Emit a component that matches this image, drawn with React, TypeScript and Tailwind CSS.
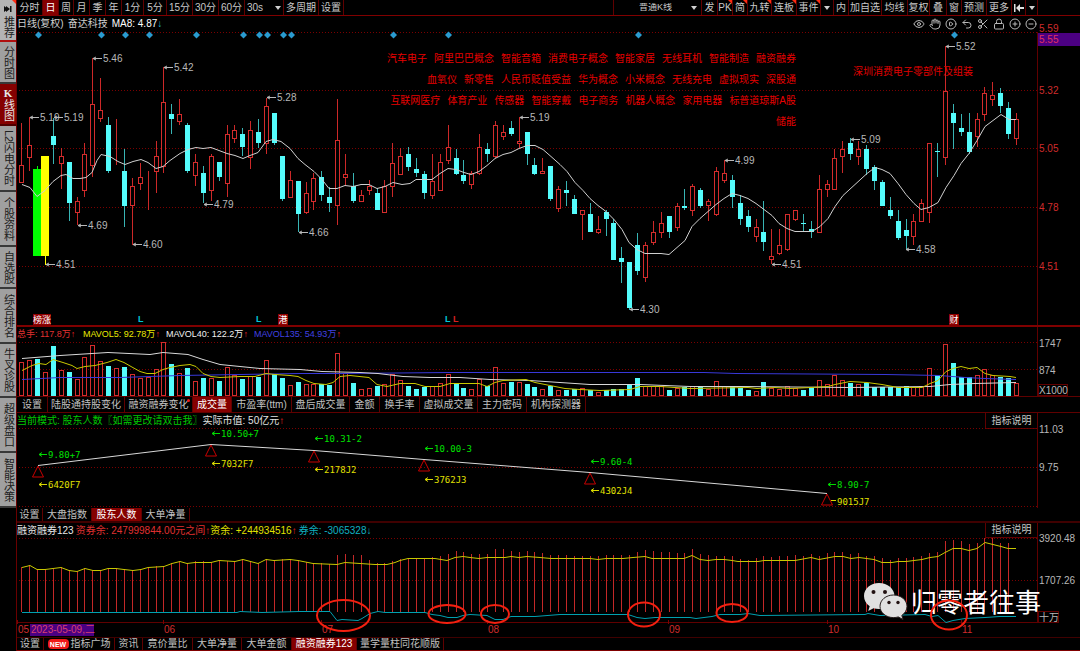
import React from "react";
import {
  CircleMinus,
  CirclePlay,
  CirclePlus,
  Eye,
  Hand,
  Lock,
  Scissors,
  Undo2,
} from "lucide-react";

type Kind = "r" | "c" | "g" | "y";
// kind, high, body top, body bottom, low, volume top
type Bar = [Kind, number, number, number, number, number];

const BARS: Bar[] = [
  ["r", 123, 165, 182, 183, 362], ["r", 117, 145, 157, 171, 360], ["g", 166, 169, 256, 256, 359],
  ["y", 156, 156, 256, 265, 372], ["c", 118, 136, 145, 164, 346], ["r", 148, 156, 163, 189, 370],
  ["c", 162, 162, 203, 221, 372], ["r", 197, 201, 212, 225, 379], ["r", 143, 154, 190, 197, 357],
  ["r", 58, 104, 165, 177, 345], ["r", 78, 110, 118, 122, 361], ["c", 117, 125, 171, 173, 366],
  ["r", 119, 165, 165, 165, 368], ["c", 149, 171, 206, 227, 367], ["r", 178, 186, 205, 245, 374],
  ["r", 163, 177, 183, 190, 378], ["r", 171, 171, 171, 210, 377], ["r", 141, 156, 171, 193, 369],
  ["r", 67, 102, 166, 173, 342], ["c", 104, 114, 119, 134, 364], ["r", 99, 114, 121, 125, 373],
  ["c", 123, 125, 171, 173, 368], ["r", 154, 162, 175, 186, 381], ["c", 166, 173, 193, 203, 378],
  ["r", 154, 156, 190, 201, 378], ["c", 162, 162, 177, 181, 381], ["r", 125, 134, 183, 197, 367],
  ["r", 125, 130, 138, 143, 375], ["c", 128, 134, 147, 156, 379], ["r", 121, 130, 157, 169, 376],
  ["c", 119, 132, 143, 148, 377], ["r", 98, 106, 143, 154, 360], ["c", 113, 113, 143, 145, 374],
  ["c", 156, 156, 199, 201, 378], ["r", 171, 180, 197, 197, 385], ["c", 181, 181, 214, 232, 382],
  ["r", 182, 193, 212, 214, 384], ["r", 173, 178, 201, 210, 384], ["c", 171, 177, 195, 201, 384],
  ["c", 187, 197, 203, 212, 385], ["r", 99, 140, 205, 225, 353], ["r", 154, 174, 177, 186, 373],
  ["c", 173, 186, 201, 203, 383], ["r", 190, 195, 201, 201, 389], ["r", 180, 186, 190, 195, 388],
  ["c", 188, 193, 210, 210, 386], ["r", 180, 186, 212, 212, 384], ["r", 143, 163, 186, 197, 374],
  ["r", 148, 156, 174, 175, 380], ["c", 147, 154, 167, 171, 386], ["c", 158, 169, 173, 177, 389],
  ["c", 171, 174, 193, 199, 387], ["r", 154, 181, 195, 199, 386], ["r", 154, 162, 190, 190, 383],
  ["r", 125, 147, 160, 164, 374], ["c", 149, 158, 174, 175, 384], ["c", 160, 175, 181, 184, 388],
  ["r", 171, 173, 184, 189, 389], ["r", 134, 147, 173, 175, 379], ["c", 143, 149, 154, 162, 386],
  ["r", 121, 125, 156, 158, 367], ["r", 125, 132, 136, 140, 383], ["c", 121, 128, 134, 136, 382],
  ["r", 117, 141, 143, 148, 382], ["c", 132, 132, 154, 165, 384], ["c", 158, 165, 174, 175, 387],
  ["r", 158, 171, 173, 173, 389], ["c", 166, 166, 199, 201, 386], ["r", 186, 189, 208, 212, 390],
  ["c", 181, 190, 193, 206, 390], ["c", 195, 199, 214, 214, 389], ["r", 210, 210, 214, 240, 388],
  ["c", 203, 214, 232, 232, 390], ["r", 216, 229, 232, 234, 392], ["c", 210, 212, 219, 236, 390],
  ["c", 219, 223, 260, 260, 389], ["c", 247, 258, 262, 283, 389], ["c", 262, 262, 308, 310, 385],
  ["c", 233, 245, 271, 275, 378], ["r", 242, 245, 277, 282, 386], ["r", 221, 232, 242, 245, 386],
  ["r", 212, 223, 232, 238, 386], ["c", 216, 216, 232, 238, 390], ["r", 203, 206, 227, 231, 388],
  ["c", 189, 206, 208, 210, 387], ["r", 184, 186, 210, 216, 386], ["c", 188, 190, 206, 208, 386],
  ["r", 199, 201, 205, 221, 389], ["r", 167, 171, 214, 216, 381], ["r", 160, 173, 180, 183, 386],
  ["c", 175, 180, 197, 208, 386], ["c", 195, 203, 219, 225, 388], ["c", 210, 216, 227, 232, 390],
  ["r", 219, 227, 236, 242, 391], ["c", 201, 232, 242, 251, 382], ["r", 229, 256, 259, 264, 388],
  ["r", 229, 245, 253, 255, 389], ["r", 214, 214, 249, 251, 386], ["r", 210, 210, 219, 221, 388],
  ["c", 214, 223, 224, 231, 390], ["c", 221, 229, 232, 238, 388], ["r", 175, 189, 232, 232, 380],
  ["r", 180, 184, 189, 197, 384], ["r", 149, 158, 189, 190, 375], ["r", 141, 149, 156, 173, 380],
  ["c", 138, 143, 154, 160, 383], ["r", 141, 149, 156, 165, 384], ["c", 145, 149, 169, 175, 383],
  ["c", 165, 167, 181, 190, 387], ["c", 180, 182, 206, 206, 387], ["c", 197, 210, 216, 219, 387],
  ["c", 210, 221, 238, 240, 387], ["c", 219, 230, 236, 249, 386], ["r", 214, 221, 236, 245, 387],
  ["r", 199, 203, 221, 221, 386], ["r", 143, 143, 212, 223, 368], ["c", 143, 151, 152, 177, 375],
  ["r", 46, 91, 157, 165, 344], ["c", 104, 113, 123, 149, 363], ["c", 114, 128, 132, 136, 377],
  ["c", 113, 132, 152, 154, 377], ["r", 113, 119, 136, 147, 375], ["r", 87, 93, 114, 121, 369],
  ["r", 82, 95, 99, 106, 375], ["c", 88, 93, 106, 113, 377], ["c", 102, 108, 134, 139, 378],
  ["r", 113, 119, 138, 145, 383],
];

const MARGIN_TOPS = [
  567, 565, 569, 569, 569, 567, 570, 571, 568, 570, 570, 568, 568, 569, 570, 569, 567, 566, 566, 563,
  561, 563, 561, 561, 562, 560, 561, 561, 559, 561, 563, 559, 560, 559, 559, 560, 562, 563, 563, 564,
  555, 554, 555, 555, 560, 563, 563, 561, 559, 558, 558, 558, 557, 556, 554, 551, 552, 554, 554, 554,
  549, 549, 551, 552, 551, 552, 553, 555, 555, 555, 556, 556, 556, 556, 555, 555, 555, 555, 552, 550,
  551, 552, 552, 553, 553, 549, 554, 555, 556, 556, 556, 559, 560, 558, 556, 557, 556, 556, 555, 556,
  554, 556, 553, 552, 552, 554, 553, 556, 556, 558, 560, 558, 558, 557, 556, 553, 552, 541, 540, 541,
  544, 543, 538, 538, 543, 543,
];

const MA8 =
  "22,184 30,187 37,196 45,190 53,181 61,175 66,174 73,178 80,178 86,177 92,172 97,160 101,154 110,156 118,161 125,164 133,161 141,159 148,162 156,168 163,166 170,160 180,153 188,149 196,147 203,148 211,147 219,150 227,153 235,155 243,158 250,155 258,152 266,141 273,139 281,141 290,148 298,158 305,164 314,171 322,179 329,188 337,188 345,185 353,186 361,184 369,184 377,188 385,186 393,182 402,184 410,183 416,179 432,179 440,173 448,168 456,169 464,172 471,174 479,171 487,165 495,158 503,154 511,152 519,148 527,145 535,145 543,149 551,156 560,164 567,171 575,182 583,190 590,198 598,205 606,211 614,219 622,229 629,242 637,249 645,253 661,253 669,254 677,247 685,240 692,226 700,218 708,211 716,204 724,198 732,193 740,195 748,198 756,203 764,209 772,215 779,223 787,228 795,231 812,231 820,226 828,218 835,206 843,195 855,184 867,173 875,167 882,169 890,173 898,183 906,194 914,203 921,209 929,207 938,202 946,187 954,175 961,163 969,153 977,140 985,126 993,120 1001,114 1009,119 1016,119";
const VOL_5 =
  "22,370 32,365 39,363 46,364 53,359 63,362 72,365 77,368 85,366 95,365 107,362 116,359 124,362 131,366 140,371 147,373 155,373 163,369 170,367 180,365 190,364 196,366 203,373 211,376 220,377 240,376 255,376 266,373 275,374 290,375 298,376 306,380 314,383 326,384 333,382 340,376 350,375 369,377 377,384 387,386 400,383 415,383 425,386 440,386 450,383 479,383 487,386 495,382 503,380 526,379 535,382 550,385 565,388 580,389 600,390 630,389 640,386 660,386 690,388 748,387 757,388 775,387 790,388 810,387 828,386 835,384 850,381 867,382 882,384 898,387 922,387 930,383 938,380 946,371 953,368 961,366 969,368 977,367 985,373 993,375 1010,376 1016,377";
const VOL_40 =
  "22,358 60,355 108,352 150,354 163,352 188,354 203,359 220,364 240,366 260,368 300,369 322,371 360,372 378,373 403,376 430,377 460,377 490,379 530,380 560,382 590,384 640,384 690,386 740,386 850,387 930,386 950,384 975,383 1016,382";
const VOL_135 =
  "22,379 60,377 120,377 180,375 240,374 300,373 340,373 452,372 704,372 736,373 885,374 940,375 965,377 985,378 1016,379";
const MARGIN_LINE =
  "22,567 30,565 37,569 45,569 61,567 69,570 77,571 85,568 93,570 101,570 108,568 116,568 124,569 133,570 141,569 148,567 164,566 172,563 180,561 187,563 195,562 211,562 219,560 235,561 243,559 258,563 266,559 274,560 290,559 298,560 313,563 337,564 345,562 360,563 375,564 387,564 395,562 400,560 408,558 435,558 447,560 455,557 463,556 470,557 479,558 487,557 505,557 511,556 519,557 527,556 540,557 551,558 590,558 598,559 606,558 623,558 633,557 645,556 652,558 684,558 692,555 700,559 708,560 716,559 724,559 732,560 738,561 758,561 764,560 795,560 811,557 819,559 835,556 843,556 851,558 859,557 874,559 882,562 892,562 898,561 906,561 922,559 930,557 938,556 945,552 953,548 961,548 969,550 977,548 985,542 993,544 1001,546 1008,548 1016,548";
const SHORT_LINE =
  "22,612 237,612 240,611 262,612 300,611 330,611 337,620 342,619 358,620 362,618 370,613 378,611 385,612 425,612 432,614 440,615 448,617 457,617 463,615 470,614 487,615 495,619 503,619 511,616 535,616 560,614 628,614 637,617 645,618 655,617 690,617 696,618 712,616 720,614 740,614 748,613 760,615 865,614 868,613 880,615 925,614 932,616 938,615 946,622 953,620 965,618 985,617 1000,616 1016,616";

const PRICE_TAGS: [number, number, string][] = [
  [93, 58, "5.46"], [164, 67, "5.42"], [267, 97, "5.28"], [30, 117, "5.19"], [54, 117, "5.19"],
  [78, 225, "4.69"], [133, 244, "4.60"], [46, 264, "4.51"], [204, 204, "4.79"], [299, 232, "4.66"],
  [520, 117, "5.19"], [725, 160, "4.99"], [851, 139, "5.09"], [946, 46, "5.52"], [772, 264, "4.51"],
  [906, 249, "4.58"], [630, 309, "4.30"],
];

const DIAMONDS = [38, 101, 125, 149, 196, 243, 259, 267, 283, 291, 393, 448, 638, 954];

const HOLDERS: { x: number; y: number; up: string; down: string; upY: number; downY: number }[] = [
  { x: 38, y: 465, up: "9.80+7", down: "6420F7", upY: 454, downY: 484 },
  { x: 211, y: 444, up: "10.50+7", down: "7032F7", upY: 433, downY: 463 },
  { x: 314, y: 450, up: "10.31-2", down: "2178J2", upY: 438, downY: 469 },
  { x: 424, y: 459, up: "10.00-3", down: "3762J3", upY: 448, downY: 479 },
  { x: 590, y: 472, up: "9.60-4", down: "4302J4", upY: 461, downY: 490 },
  { x: 827, y: 493, up: "8.90-7", down: "9015J7", upY: 484, downY: 501 },
];

const CONCEPTS = [
  ["汽车电子", "阿里巴巴概念", "智能音箱", "消费电子概念", "智能家居", "无线耳机", "智能制造", "融资融券"],
  ["血氧仪", "新零售", "人民币贬值受益", "华为概念", "小米概念", "无线充电", "虚拟现实", "深股通"],
  ["互联网医疗", "体育产业", "传感器", "智能穿戴", "电子商务", "机器人概念", "家用电器", "标普道琼斯A股"],
];

const barX = (i: number) => Math.floor(21.8 + 7.895 * i);

const Caret = () => (
  <svg viewBox="0 0 6 4" className="h-1 w-1.5 shrink-0 fill-[#d0d0d0]" aria-hidden="true">
    <path d="M0 0h6L3 4z" />
  </svg>
);

const Corner = () => (
  <svg viewBox="0 0 4 4" className="absolute top-0 right-0 size-1 fill-[#ff2a10]" aria-hidden="true">
    <path d="M0 0h4v4z" />
  </svg>
);

const SIDE: [string, string][] = [
  ["分时图", "h-[42px]"],
  ["K线图", "h-[42px]"],
  ["L2闪电分时", "h-[66px]"],
  ["个股资料", "h-[55px]"],
  ["自选股", "h-[42px]"],
  ["综合排名", "h-[55px]"],
  ["牛叉诊股", "h-[54px]"],
  ["超级盘口", "h-[55px]"],
  ["智能决策", "h-[55px]"],
];

function Sidebar() {
  return (
    <nav className="flex w-[17px] shrink-0 flex-col border-r border-[#6a0000] text-[11px]">
      <button className="relative flex h-[42px] w-4 flex-col items-center gap-1 border-b-2 border-[#b01010] bg-[#b4b4b4] pt-1.5 text-[#202020]">
        <svg viewBox="0 0 8 6" className="h-1.5 w-2 fill-[#101010]" aria-hidden="true">
          <path d="M0 0l4 3-4 3zM2 0l4 3-4 3zM6 0h1.5v6H6z" />
        </svg>
        <Corner />
        <span className="leading-none [writing-mode:vertical-rl]">推荐</span>
      </button>
      {SIDE.map(([name, height]) => (
        <button
          key={name}
          className={`flex w-4 items-center justify-center border-b-2 leading-none ${height} ${
            name === "K线图" ? "border-[#500000] bg-[#850000] text-[#e8e8e8]" : "border-[#383838] bg-[#a0a0a0] text-[#202020]"
          }`}
        >
          {name === "K线图" ? (
            <span className="flex flex-col items-center">
              <b className="font-['Liberation_Serif',serif]">K</b>
              <span className="[writing-mode:vertical-rl]">线图</span>
            </span>
          ) : (
            <span className="whitespace-nowrap [writing-mode:vertical-rl]">{name}</span>
          )}
        </button>
      ))}
    </nav>
  );
}

const PERIODS: [string, string][] = [
  ["分时", "w-[26px]"], ["日", "w-4"], ["周", "w-[15px]"], ["月", "w-4"], ["季", "w-4"], ["年", "w-4"],
  ["1分", "w-[22px]"], ["5分", "w-[23px]"], ["15分", "w-[26px]"], ["30分", "w-[26px]"], ["60分", "w-[26px]"],
];

const TOOLS: [string, string, boolean][] = [
  ["发", "w-4", false], ["PK", "w-[15px]", true], ["简", "w-[15px]", true], ["九转", "w-6", true],
  ["连板", "w-[25px]", true], ["事件", "w-6", true], ["▾", "w-[13px]", false], ["内", "w-[15px]", false],
  ["加自选", "w-[33px]", false], ["均线", "w-[26px]", false], ["复权", "w-[22px]", false], ["叠", "w-[17px]", false],
  ["窗", "w-[15px]", false], ["预测", "w-[25px]", false], ["更多", "w-[25px]", false],
];

const CELL = "flex shrink-0 items-center justify-center border-r border-[#600000] whitespace-nowrap";

function Toolbar() {
  return (
    <div className="flex h-4 border-b border-[#800000] text-[#c8c8c8]">
      {PERIODS.map(([name, width]) => (
        <button key={name} className={`${CELL} ${width} ${name === "日" ? "bg-[#850000] text-white" : ""}`}>
          {name}
        </button>
      ))}
      <div className={`${CELL} w-[39px] gap-1`}>
        <select aria-label="秒级周期" className="w-6 appearance-none bg-transparent outline-none">
          <option>30s</option>
        </select>
        <Caret />
      </div>
      <button className={`${CELL} w-[35px]`}>多周期</button>
      <button className={`${CELL} w-[25px]`}>设置</button>
      <div className="flex-1 border-r border-[#600000]" />
      <div className={`${CELL} w-[88px] justify-end gap-3 pr-1`}>
        <select aria-label="K线类型" className="w-10 appearance-none bg-transparent text-[9px] outline-none">
          <option>普通K线</option>
        </select>
        <Caret />
      </div>
      {TOOLS.map(([name, width, hot]) => (
        <button key={name} className={`relative ${CELL} ${width}`} aria-label={name === "▾" ? "更多事件" : undefined}>
          {name === "▾" ? <Caret /> : name}
          {hot && <Corner />}
        </button>
      ))}
      <button className={`${CELL} w-3.5`} aria-label="收起">
        <svg viewBox="0 0 10 8" className="h-2 w-2.5 fill-[#e0e0e0]" aria-hidden="true">
          <path d="M0 0h1.5v8H0zM2 4l4-4v3h4v2H6v3z" />
        </svg>
      </button>
      <button className={`${CELL} mr-[42px] w-3`} aria-label="展开">
        <Caret />
      </button>
    </div>
  );
}

const CHART_ICONS = [
  { Icon: Eye, label: "显示" },
  { Icon: Hand, label: "拖动" },
  { Icon: CirclePlay, label: "播放" },
  { Icon: Undo2, label: "撤销" },
  { Icon: Scissors, label: "剪切" },
  { Icon: Lock, label: "锁定" },
  { Icon: CirclePlus, label: "放大" },
  { Icon: CircleMinus, label: "缩小" },
];

function Grid({ ys }: { ys: number[] }) {
  return (
    <g stroke="#7a0000" strokeDasharray="1 2" shapeRendering="crispEdges">
      {ys.map((y) => (
        <line key={y} x1="19" x2="1037" y1={y + 0.5} y2={y + 0.5} />
      ))}
    </g>
  );
}

const Poly = ({ points, color }: { points: string; color: string }) => (
  <polyline points={points} fill="none" stroke={color} transform="translate(0 0.5)" />
);

const AxisLine = ({ y1, y2 }: { y1: number; y2: number }) => (
  <line x1="1037.5" x2="1037.5" y1={y1} y2={y2} stroke="#600000" />
);

function Candle({ bar, i }: { bar: Bar; i: number }) {
  const [kind, high, top, bottom, low] = bar;
  const x = barX(i);
  if (kind === "g" || kind === "y") {
    const color = kind === "g" ? "#00ff00" : "#ffff00";
    return (
      <g fill={color}>
        <rect x={x - 4} y={top} width="8" height={bottom - top} />
        <rect x={x} y={high} width="1" height={low - high} />
      </g>
    );
  }
  if (kind === "c") {
    return (
      <g>
        <rect x={x} y={high} width="1" height={low - high} fill="#38b4b4" />
        <rect x={x - 2} y={top} width="5" height={Math.max(1, bottom - top)} fill="#54fcfc" />
      </g>
    );
  }
  return (
    <g>
      <rect x={x} y={high} width="1" height={low - high} fill="#cc2828" />
      <rect x={x - 1.5} y={top + 0.5} width="4" height={Math.max(0, bottom - top)} fill="#000" stroke="#d42c2c" />
    </g>
  );
}

function Flag({ x, text, w }: { x: number; text: string; w: number }) {
  return (
    <g>
      <rect x={x} y="314" width={w} height="11" fill="#900000" />
      <text x={x + w / 2} y="323" textAnchor="middle" fill="#fff" fontSize="9">
        {text}
      </text>
    </g>
  );
}

function PriceChart() {
  return (
    <svg viewBox="17 32 1063 293" className="block w-full overflow-visible" fontSize="10" role="img" aria-label="日K线图">
      <Grid ys={[32, 90, 148, 207, 266]} />
      <AxisLine y1={32} y2={325} />
      <g fill="#2a9bd0">
        {DIAMONDS.map((x) => (
          <path key={x} d={`M${x + 0.5} 31.5l3.5 3.5-3.5 3.5-3.5-3.5z`} />
        ))}
      </g>
      <g shapeRendering="crispEdges">
        {BARS.map((bar, i) => (
          <Candle key={i} bar={bar} i={i} />
        ))}
      </g>
      <Poly points={MA8} color="#d0d0d0" />
      {PRICE_TAGS.map(([x, y, text]) => (
        <g key={`${x}-${y}`} fill="#b8b8b8">
          <path d={`M${x} ${y + 0.5}h9M${x + 3} ${y - 1}l-3 1.5 3 1.5`} stroke="#b8b8b8" fill="none" />
          <text x={x + 10} y={y + 4}>
            {text}
          </text>
        </g>
      ))}
      <text x="853" y="75" fill="#e00000">
        深圳消费电子零部件及组装
      </text>
      <Flag x={33} w={18} text="榜涨" />
      <Flag x={278} w={10} text="港" />
      <Flag x={949} w={10} text="财" />
      <g fontWeight="bold" fontSize="9">
        <text x="138" y="322" fill="#00c8d8">L</text>
        <text x="256" y="322" fill="#00c8d8">L</text>
        <text x="445" y="322" fill="#00c8d8">L</text>
        <text x="453" y="322" fill="#d82020">L</text>
      </g>
      <g fill="#d02c2c">
        <text x="1039" y="32">5.59</text>
        <rect x="1038" y="33" width="42" height="13" fill="#4b0082" />
        <text x="1039" y="43" fill="#e03060">5.55</text>
        <text x="1039" y="94">5.32</text>
        <text x="1039" y="152">5.05</text>
        <text x="1039" y="211">4.78</text>
        <text x="1039" y="270">4.51</text>
      </g>
    </svg>
  );
}

function VolumeChart() {
  return (
    <svg viewBox="17 342 1063 54" className="block w-full overflow-visible" fontSize="10" role="img" aria-label="成交量">
      <Grid ys={[342, 369]} />
      <AxisLine y1={342} y2={396} />
      <g shapeRendering="crispEdges">
        {BARS.map(([kind, , , , , top], i) =>
          kind === "c" || kind === "g" ? (
            <rect key={i} x={barX(i) - 2} y={top} width="5" height={396 - top} fill="#54fcfc" />
          ) : (
            <rect key={i} x={barX(i) - 1.5} y={top + 0.5} width="4" height={395 - top} fill="#000" stroke="#d42c2c" />
          ),
        )}
      </g>
      <Poly points={VOL_135} color="#3838d8" />
      <Poly points={VOL_40} color="#d8d8d8" />
      <Poly points={VOL_5} color="#c8c800" />
      <g fill="#b8b8b8">
        <text x="1039" y="347">1747</text>
        <text x="1039" y="374">874</text>
        <rect x="1038.5" y="384.5" width="29" height="11" fill="none" stroke="#600000" />
        <text x="1039" y="394">X1000</text>
      </g>
    </svg>
  );
}

function HolderChart() {
  return (
    <svg
      viewBox="17 429 1063 79"
      className="block w-full overflow-visible font-['DejaVu_Sans_Mono',monospace]"
      fontSize="9"
      role="img"
      aria-label="股东人数"
    >
      <Grid ys={[428, 467, 506]} />
      <AxisLine y1={429} y2={508} />
      <Poly points={HOLDERS.map((h) => `${h.x},${h.y}`).join(" ")} color="#d8d8d8" />
      {HOLDERS.map((h) => (
        <g key={h.x}>
          <path d={`M${h.x} ${h.y + 1}l5.500 11h-11z`} fill="none" stroke="#c80000" />
          <path d={`M${h.x + 1} ${h.upY + 0.5}h8M${h.x + 4} ${h.upY - 1.5}l-3 2 3 2`} fill="none" stroke="#00d800" />
          <text x={h.x + 10} y={h.upY + 4} fill="#00e000">
            {h.up}
          </text>
          <path
            d={h.x === 827 ? "M831 500.5h5" : `M${h.x + 1} ${h.downY + 0.5}h8M${h.x + 4} ${h.downY - 1.5}l-3 2 3 2`}
            fill="none"
            stroke="#d8d800"
          />
          <text x={h.x + 10} y={h.downY + 4} fill="#e0e000">
            {h.down}
          </text>
        </g>
      ))}
      <g fill="#b8b8b8" fontSize="10" className="font-['Liberation_Sans',sans-serif]">
        <text x="1039" y="433">11.03</text>
        <text x="1039" y="471">9.75</text>
      </g>
    </svg>
  );
}

const DATES: [number, string][] = [
  [18, "05"], [164, "06"], [322, "07"], [488, "08"], [669, "09"], [828, "10"], [962, "11"],
];

const RINGS = [
  [343.5, 615.5, 26.5, 15.5], [447, 614, 18.5, 9], [495, 614, 14, 9],
  [644, 614.5, 16, 12], [732, 613, 15.5, 9], [949, 615, 18, 14.5],
];

function MarginChart() {
  return (
    <svg viewBox="17 538 1063 99" className="block w-full overflow-visible" fontSize="10" role="img" aria-label="融资融券">
      <Grid ys={[538, 580]} />
      <AxisLine y1={538} y2={623} />
      <line x1="17" x2="1038" y1="622.5" y2="622.5" stroke="#600000" />
      <g fill="#c42828" shapeRendering="crispEdges">
        {MARGIN_TOPS.map((top, i) => (
          <rect key={i} x={barX(i)} y={top} width="1" height={612 - top} />
        ))}
      </g>
      <Poly points={SHORT_LINE} color="#00a0b0" />
      <Poly points={MARGIN_LINE} color="#c8c800" />
      <g fill="#b8b8b8">
        <text x="1039" y="542">3920.48</text>
        <text x="1039" y="584">1707.26</text>
        <rect x="1038.5" y="611.5" width="20" height="11" fill="none" stroke="#600000" />
        <text x="1039" y="621">十万</text>
      </g>
      <g fill="#d02c2c">
        {DATES.map(([x, text]) => (
          <g key={text}>
            <rect x={x - 1} y="620" width="1" height="4" fill="#800000" />
            <text x={x} y="633">
              {text}
            </text>
          </g>
        ))}
        <rect x="30" y="624" width="64" height="12" fill="#4b0082" />
        <text x="31" y="633" fill="#d84070">2023-05-09,二</text>
      </g>
      <g>
        <path
          d="M879 583c-8.500 0-15 5.800-15 13 0 4.200 2.200 7.700 5.700 10.200L868.200 611l5.300-2.800c2 .6 4 .9 6.500.8 8-.3 14.500-5.800 14.500-13S887.500 583 879 583z"
          fill="#e0e0e0"
        />
        <path
          d="M893.500 595c-7.500 0-13.500 5-13.500 11.300s6 11.300 13.500 11.300c1.700 0 3.300-.2 4.800-.7l4.700 2.600-1.200-4.100c3.200-2.100 5.200-5.400 5.200-9.100 0-6.300-6-11.300-13.500-11.300z"
          fill="#e0e0e0"
          stroke="#282020"
          strokeWidth="1"
        />
        <g fill="#201010">
          <circle cx="873.500" cy="592" r="2" />
          <circle cx="885" cy="592" r="2" />
          <circle cx="889" cy="602.500" r="1.700" />
          <circle cx="898" cy="602.500" r="1.700" />
        </g>
        <text x="911" y="612" fontSize="26" fill="#fff">
          归零者往事
        </text>
      </g>
      <g fill="none" stroke="#f42010" strokeWidth="2">
        {RINGS.map(([cx, cy, rx, ry]) => (
          <ellipse key={cx} cx={cx} cy={cy} rx={rx} ry={ry} />
        ))}
      </g>
    </svg>
  );
}

function Tabs({ items, active, className }: { items: [string, string][]; active: string; className: string }) {
  return (
    <div className={`flex text-[#c0c0c0] ${className}`}>
      {items.map(([name, width]) => (
        <button key={name} className={`relative ${CELL} ${width} ${name === active ? "bg-[#850000] text-white" : ""}`}>
          {name === "指标广场" && (
            <span className="mr-0.5 flex h-2.5 w-[21px] items-center justify-center rounded-sm bg-[#f01818] text-[7px] font-bold text-white">
              NEW
            </span>
          )}
          {name}
          {name === "融资融券变化" && <span className="absolute top-0.5 right-0.5 size-[3px] rounded-full bg-[#f01818]" />}
        </button>
      ))}
    </div>
  );
}

function PanelHeader({ children, help, className }: { children: React.ReactNode; help?: boolean; className: string }) {
  return (
    <div className={`flex whitespace-nowrap ${className}`}>
      <div className="flex flex-1 items-center">{children}</div>
      {help && (
        <button className="w-[52px] border-b border-l border-[#600000] text-center text-[#c8c8c8]">指标说明</button>
      )}
      <div className="w-[43px] border-l border-[#600000]" />
    </div>
  );
}

const Up = () => <span className="font-bold text-[#e82020]">↑</span>;

export default function App() {
  return (
    <div className="flex w-full bg-black font-['Liberation_Sans','Noto_Sans_CJK_SC',sans-serif] text-[10px] leading-none">
      <Sidebar />
      <main className="min-w-0 flex-1 border-b border-[#800000]">
        <Toolbar />

        <section className="relative">
          <div className="flex h-4 items-center pr-[43px] whitespace-nowrap text-[#d0d0d0]">
            <span>日线(复权)</span>
            <span className="ml-1">奋达科技</span>
            <span className="ml-1 text-white">MA8: 4.87</span>
            <span className="font-bold text-[#20c0d0]">↓</span>
            <div className="ml-auto flex gap-1">
              {CHART_ICONS.map(({ Icon, label }) => (
                <button key={label} aria-label={label}>
                  <Icon className="size-3 text-[#b8b8b8]" strokeWidth={2} />
                </button>
              ))}
            </div>
          </div>
          <PriceChart />
          <div className="absolute top-[38px] left-[35%] flex w-[407px] flex-col gap-[11px] whitespace-nowrap text-[#e80000]">
            {CONCEPTS.map((row) => (
              <div key={row[0]} className="flex justify-end gap-[7px]">
                {row.map((name) => (
                  <span key={name}>{name}</span>
                ))}
              </div>
            ))}
            <span className="self-end">储能</span>
          </div>
        </section>

        <section className="border-t-2 border-[#800000]">
          <PanelHeader className="h-[15px] text-[9px]">
            <span className="w-[66px] text-[#e03030]">总手: 117.8万<Up /></span>
            <span className="w-[83px] text-[#e8e800]">MAVOL5: 92.78万<Up /></span>
            <span className="w-[88px] text-[#f0f0f0]">MAVOL40: 122.2万<Up /></span>
            <span className="text-[#4040e0]">MAVOL135: 54.93万<Up /></span>
          </PanelHeader>
          <VolumeChart />
          <Tabs
            className="h-[17px] border-y border-[#600000]"
            active="成交量"
            items={[
              ["设置", "w-[31px]"], ["陆股通持股变化", "w-[77px]"], ["融资融券变化", "w-[68px]"], ["成交量", "w-[39px]"],
              ["市盈率(ttm)", "w-[60px]"], ["盘后成交量", "w-[58px]"], ["金额", "w-[30px]"], ["换手率", "w-10"],
              ["虚拟成交量", "w-[58px]"], ["主力密码", "w-[49px]"], ["机构探测器", "w-[59px]"],
            ]}
          />
        </section>

        <section>
          <PanelHeader help className="h-4">
            <span className="text-[#00c800]">当前模式: 股东人数〖如需更改请双击我〗</span>
            <span className="text-[#e0e0e0]">实际市值: 50亿元<Up /></span>
          </PanelHeader>
          <HolderChart />
          <Tabs
            className="h-[13px]"
            active="股东人数"
            items={[["设置", "w-[26px]"], ["大盘指数", "w-[49px]"], ["股东人数", "w-[50px]"], ["大单净量", "w-12"]]}
          />
        </section>

        <section className="border-t-2 border-[#400000]">
          <PanelHeader help className="h-[15px]">
            <span className="text-[#e8e8e8]">融资融券123</span>
            <span className="ml-0.5 text-[#e03030]">资券余: 247999844.00元之间<Up /></span>
            <span className="text-[#e0e000]">资余: +244934516<Up /></span>
            <span className="ml-0.5 text-[#10b0c0]">券余: -3065328↓</span>
          </PanelHeader>
          <MarginChart />
          <Tabs
            className="h-[13px] border-t border-[#400000]"
            active="融资融券123"
            items={[
              ["设置", "w-[27px]"], ["指标广场", "w-[71px]"], ["资讯", "w-7"], ["竟价量比", "w-[50px]"],
              ["大单净量", "w-[49px]"], ["大单金额", "w-[50px]"], ["融资融券123", "w-[65px]"], ["量学量柱同花顺版", "w-[87px]"],
            ]}
          />
        </section>
      </main>
    </div>
  );
}
